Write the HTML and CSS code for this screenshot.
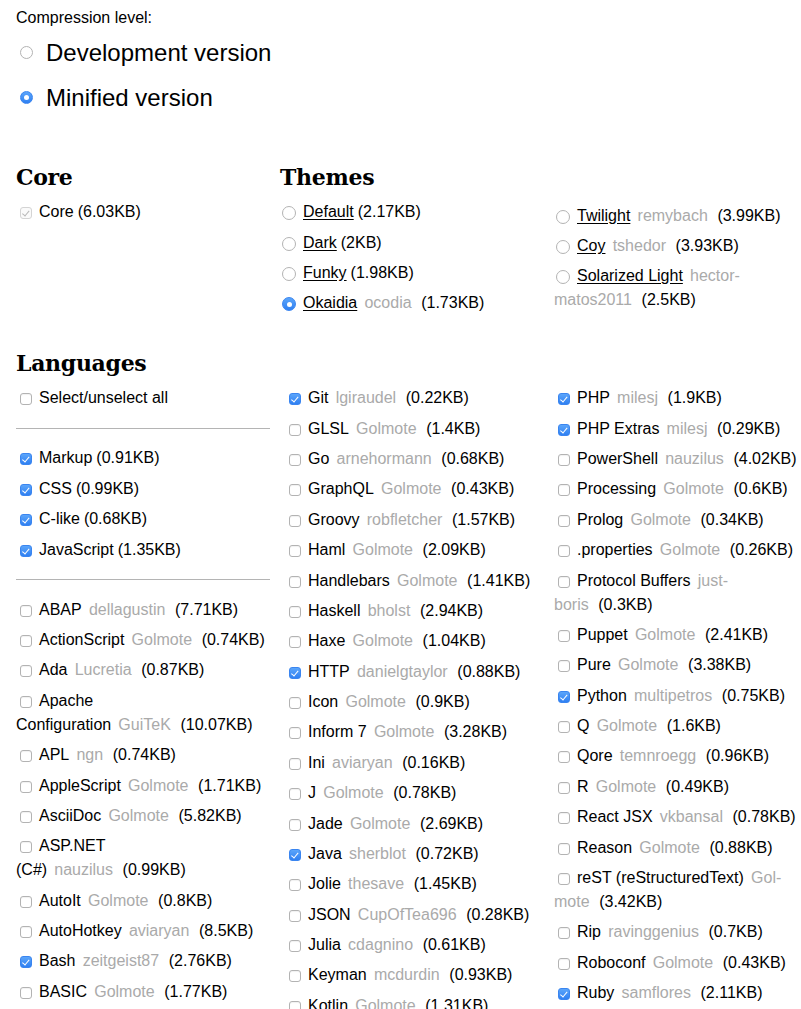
FILE: index.html
```html
<!DOCTYPE html>
<html lang="en">
<head>
<meta charset="utf-8">
<title>Download Prism</title>
<link rel="stylesheet" href="styles.css">
</head>
<body>
<div class="page">
  <section class="compression">
    <p>Compression level:</p>
    <label class="big"><input type="radio" name="c" class="rb-big">Development version</label>
    <label class="big"><input type="radio" name="c" class="rb-big" checked>Minified version</label>
  </section>

  <div class="top">
    <section class="core">
      <h2>Core</h2>
      <label class="row"><input type="checkbox" class="cb" checked disabled>Core<span class="size">(6.03KB)</span></label>
    </section>
    <section class="themes">
      <h2>Themes</h2>
      <div class="theme-cols">
        <div class="col">
          <label class="row"><input type="radio" name="t" class="rb"><a href="#">Default</a><span class="size">(2.17KB)</span></label>
          <label class="row"><input type="radio" name="t" class="rb"><a href="#">Dark</a><span class="size">(2KB)</span></label>
          <label class="row"><input type="radio" name="t" class="rb"><a href="#">Funky</a><span class="size">(1.98KB)</span></label>
          <label class="row"><input type="radio" name="t" class="rb" checked><a href="#">Okaidia</a><span class="owner">ocodia</span><span class="size">(1.73KB)</span></label>
        </div>
        <div class="col col-shift">
          <label class="row"><input type="radio" name="t" class="rb"><a href="#">Twilight</a><span class="owner">remybach</span><span class="size">(3.99KB)</span></label>
          <label class="row"><input type="radio" name="t" class="rb"><a href="#">Coy</a><span class="owner">tshedor</span><span class="size">(3.93KB)</span></label>
          <label class="row"><input type="radio" name="t" class="rb"><a href="#">Solarized Light</a><span class="owner">hector-matos2011</span><span class="size">(2.5KB)</span></label>
        </div>
      </div>
    </section>
  </div>

  <section class="languages">
    <h2>Languages</h2>
    <div class="lang-cols">
      <div class="col">
        <label class="row"><input type="checkbox" class="cb">Select/unselect all</label>
        <hr>
        <label class="row"><input type="checkbox" class="cb" checked>Markup<span class="size">(0.91KB)</span></label>
        <label class="row"><input type="checkbox" class="cb" checked>CSS<span class="size">(0.99KB)</span></label>
        <label class="row"><input type="checkbox" class="cb" checked>C-like<span class="size">(0.68KB)</span></label>
        <label class="row"><input type="checkbox" class="cb" checked>JavaScript<span class="size">(1.35KB)</span></label>
        <hr>
        <label class="row"><input type="checkbox" class="cb">ABAP<span class="owner">dellagustin</span><span class="size">(7.71KB)</span></label>
        <label class="row"><input type="checkbox" class="cb">ActionScript<span class="owner">Golmote</span><span class="size">(0.74KB)</span></label>
        <label class="row"><input type="checkbox" class="cb">Ada<span class="owner">Lucretia</span><span class="size">(0.87KB)</span></label>
        <label class="row"><input type="checkbox" class="cb">Apache Configuration<span class="owner">GuiTeK</span><span class="size">(10.07KB)</span></label>
        <label class="row"><input type="checkbox" class="cb">APL<span class="owner">ngn</span><span class="size">(0.74KB)</span></label>
        <label class="row"><input type="checkbox" class="cb">AppleScript<span class="owner">Golmote</span><span class="size">(1.71KB)</span></label>
        <label class="row"><input type="checkbox" class="cb">AsciiDoc<span class="owner">Golmote</span><span class="size">(5.82KB)</span></label>
        <label class="row"><input type="checkbox" class="cb">ASP.NET (C#)<span class="owner">nauzilus</span><span class="size">(0.99KB)</span></label>
        <label class="row"><input type="checkbox" class="cb">AutoIt<span class="owner">Golmote</span><span class="size">(0.8KB)</span></label>
        <label class="row"><input type="checkbox" class="cb">AutoHotkey<span class="owner">aviaryan</span><span class="size">(8.5KB)</span></label>
        <label class="row"><input type="checkbox" class="cb" checked>Bash<span class="owner">zeitgeist87</span><span class="size">(2.76KB)</span></label>
        <label class="row"><input type="checkbox" class="cb">BASIC<span class="owner">Golmote</span><span class="size">(1.77KB)</span></label>
        <label class="row"><input type="checkbox" class="cb">Batch<span class="owner">Golmote</span><span class="size">(0.75KB)</span></label>
      </div>
      <div class="col">
        <label class="row"><input type="checkbox" class="cb" checked>Git<span class="owner">lgiraudel</span><span class="size">(0.22KB)</span></label>
        <label class="row"><input type="checkbox" class="cb">GLSL<span class="owner">Golmote</span><span class="size">(1.4KB)</span></label>
        <label class="row"><input type="checkbox" class="cb">Go<span class="owner">arnehormann</span><span class="size">(0.68KB)</span></label>
        <label class="row"><input type="checkbox" class="cb">GraphQL<span class="owner">Golmote</span><span class="size">(0.43KB)</span></label>
        <label class="row"><input type="checkbox" class="cb">Groovy<span class="owner">robfletcher</span><span class="size">(1.57KB)</span></label>
        <label class="row"><input type="checkbox" class="cb">Haml<span class="owner">Golmote</span><span class="size">(2.09KB)</span></label>
        <label class="row"><input type="checkbox" class="cb">Handlebars<span class="owner">Golmote</span><span class="size">(1.41KB)</span></label>
        <label class="row"><input type="checkbox" class="cb">Haskell<span class="owner">bholst</span><span class="size">(2.94KB)</span></label>
        <label class="row"><input type="checkbox" class="cb">Haxe<span class="owner">Golmote</span><span class="size">(1.04KB)</span></label>
        <label class="row"><input type="checkbox" class="cb" checked>HTTP<span class="owner">danielgtaylor</span><span class="size">(0.88KB)</span></label>
        <label class="row"><input type="checkbox" class="cb">Icon<span class="owner">Golmote</span><span class="size">(0.9KB)</span></label>
        <label class="row"><input type="checkbox" class="cb">Inform 7<span class="owner">Golmote</span><span class="size">(3.28KB)</span></label>
        <label class="row"><input type="checkbox" class="cb">Ini<span class="owner">aviaryan</span><span class="size">(0.16KB)</span></label>
        <label class="row"><input type="checkbox" class="cb">J<span class="owner">Golmote</span><span class="size">(0.78KB)</span></label>
        <label class="row"><input type="checkbox" class="cb">Jade<span class="owner">Golmote</span><span class="size">(2.69KB)</span></label>
        <label class="row"><input type="checkbox" class="cb" checked>Java<span class="owner">sherblot</span><span class="size">(0.72KB)</span></label>
        <label class="row"><input type="checkbox" class="cb">Jolie<span class="owner">thesave</span><span class="size">(1.45KB)</span></label>
        <label class="row"><input type="checkbox" class="cb">JSON<span class="owner">CupOfTea696</span><span class="size">(0.28KB)</span></label>
        <label class="row"><input type="checkbox" class="cb">Julia<span class="owner">cdagnino</span><span class="size">(0.61KB)</span></label>
        <label class="row"><input type="checkbox" class="cb">Keyman<span class="owner">mcdurdin</span><span class="size">(0.93KB)</span></label>
        <label class="row"><input type="checkbox" class="cb">Kotlin<span class="owner">Golmote</span><span class="size">(1.31KB)</span></label>
      </div>
      <div class="col">
        <label class="row"><input type="checkbox" class="cb" checked>PHP<span class="owner">milesj</span><span class="size">(1.9KB)</span></label>
        <label class="row"><input type="checkbox" class="cb" checked>PHP Extras<span class="owner">milesj</span><span class="size">(0.29KB)</span></label>
        <label class="row"><input type="checkbox" class="cb">PowerShell<span class="owner">nauzilus</span><span class="size">(4.02KB)</span></label>
        <label class="row"><input type="checkbox" class="cb">Processing<span class="owner">Golmote</span><span class="size">(0.6KB)</span></label>
        <label class="row"><input type="checkbox" class="cb">Prolog<span class="owner">Golmote</span><span class="size">(0.34KB)</span></label>
        <label class="row"><input type="checkbox" class="cb">.properties<span class="owner">Golmote</span><span class="size">(0.26KB)</span></label>
        <label class="row"><input type="checkbox" class="cb">Protocol Buffers<span class="owner">just-boris</span><span class="size">(0.3KB)</span></label>
        <label class="row"><input type="checkbox" class="cb">Puppet<span class="owner">Golmote</span><span class="size">(2.41KB)</span></label>
        <label class="row"><input type="checkbox" class="cb">Pure<span class="owner">Golmote</span><span class="size">(3.38KB)</span></label>
        <label class="row"><input type="checkbox" class="cb" checked>Python<span class="owner">multipetros</span><span class="size">(0.75KB)</span></label>
        <label class="row"><input type="checkbox" class="cb">Q<span class="owner">Golmote</span><span class="size">(1.6KB)</span></label>
        <label class="row"><input type="checkbox" class="cb">Qore<span class="owner">temnroegg</span><span class="size">(0.96KB)</span></label>
        <label class="row"><input type="checkbox" class="cb">R<span class="owner">Golmote</span><span class="size">(0.49KB)</span></label>
        <label class="row"><input type="checkbox" class="cb">React JSX<span class="owner">vkbansal</span><span class="size">(0.78KB)</span></label>
        <label class="row"><input type="checkbox" class="cb">Reason<span class="owner">Golmote</span><span class="size">(0.88KB)</span></label>
        <label class="row"><input type="checkbox" class="cb">reST (reStructuredText)<span class="owner">Gol&shy;mote</span><span class="size">(3.42KB)</span></label>
        <label class="row"><input type="checkbox" class="cb">Rip<span class="owner">ravinggenius</span><span class="size">(0.7KB)</span></label>
        <label class="row"><input type="checkbox" class="cb">Roboconf<span class="owner">Golmote</span><span class="size">(0.43KB)</span></label>
        <label class="row"><input type="checkbox" class="cb" checked>Ruby<span class="owner">samflores</span><span class="size">(2.11KB)</span></label>
        <label class="row"><input type="checkbox" class="cb">Rust<span class="owner">Golmote</span><span class="size">(0.7KB)</span></label>
      </div>
    </div>
  </section>
</div>
</body>
</html>
```
FILE: styles.css
```css
html {
  overflow: hidden;
}

body {
  margin: 0;
  padding: 6px 0 0 16px;
  background: #fff;
  color: #000;
  font-family: "Liberation Sans", Arial, sans-serif;
  font-size: 16px;
  line-height: 24px;
}

.page {
  width: 794px;
}

.compression p {
  margin: 0;
}

.big {
  display: block;
  font-size: 24px;
  line-height: 36px;
  padding: 4.5px 0;
}

.top {
  display: grid;
  grid-template-columns: 264px 1fr;
  margin-top: 39px;
}

h2 {
  margin: 0 0 2px;
  font-family: "DejaVu Serif", serif;
  font-weight: bold;
  font-size: 22px;
  line-height: 36px;
  letter-spacing: -0.3px;
}

.row {
  display: block;
  padding: 3.2px 0;
}

.row a {
  color: #000;
  text-decoration: underline;
  text-underline-offset: 2px;
}

.owner {
  color: #aaa;
  margin-left: 0.45em;
}

.size {
  margin-left: 0.25em;
}

.owner + .size {
  margin-left: 0.6em;
}

.theme-cols {
  display: grid;
  grid-template-columns: 254px 254px;
  column-gap: 20px;
}

.col-shift {
  padding-top: 3.5px;
}

.languages {
  margin-top: 26.6px;
}

.lang-cols {
  display: grid;
  grid-template-columns: 254px 254px 254px;
  column-gap: 15px;
}

hr {
  border: 0;
  border-top: 1px solid #b4b4b4;
  margin: 14.4px 0;
  height: 0;
}

/* checkboxes */
.cb {
  -webkit-appearance: none;
  appearance: none;
  position: relative;
  box-sizing: border-box;
  width: 12px;
  height: 12px;
  margin: 0 7px 0 4px;
  vertical-align: -2px;
  border: 1px solid #b3b3b3;
  border-radius: 3px;
  background: #fff;
  box-shadow: inset 0 1px 1px rgba(0, 0, 0, 0.06);
}

.cb:checked {
  border-color: #3a85f0;
  background: linear-gradient(#5ba5fa, #2f80f2);
  box-shadow: none;
}

.cb:checked::after {
  content: "";
  position: absolute;
  left: 3.2px;
  top: 1px;
  width: 2.5px;
  height: 5.5px;
  border: solid #fff;
  border-width: 0 1.6px 1.6px 0;
  transform: rotate(40deg);
}

.cb:checked:disabled {
  border-color: #d4d4d4;
  background: #fafafa;
}

.cb:checked:disabled::after {
  border-color: #b8b8b8;
}

/* theme radios */
.rb {
  -webkit-appearance: none;
  appearance: none;
  position: relative;
  box-sizing: border-box;
  width: 14px;
  height: 14px;
  margin: 0 7px 0 2px;
  vertical-align: -3px;
  border: 1px solid #b3b3b3;
  border-radius: 50%;
  background: #fff;
}

.rb:checked,
.rb-big:checked {
  border-color: #3a85f0;
  background: linear-gradient(#5ba5fa, #2f80f2);
}

.rb:checked::after,
.rb-big:checked::after {
  content: "";
  position: absolute;
  left: 50%;
  top: 50%;
  width: 5px;
  height: 5px;
  margin: -2.5px 0 0 -2.5px;
  border-radius: 50%;
  background: #fff;
}

.rb-big {
  -webkit-appearance: none;
  appearance: none;
  position: relative;
  box-sizing: border-box;
  width: 13px;
  height: 13px;
  margin: 0 13px 0 4px;
  vertical-align: 2px;
  border: 1px solid #b3b3b3;
  border-radius: 50%;
  background: #fff;
}
```
